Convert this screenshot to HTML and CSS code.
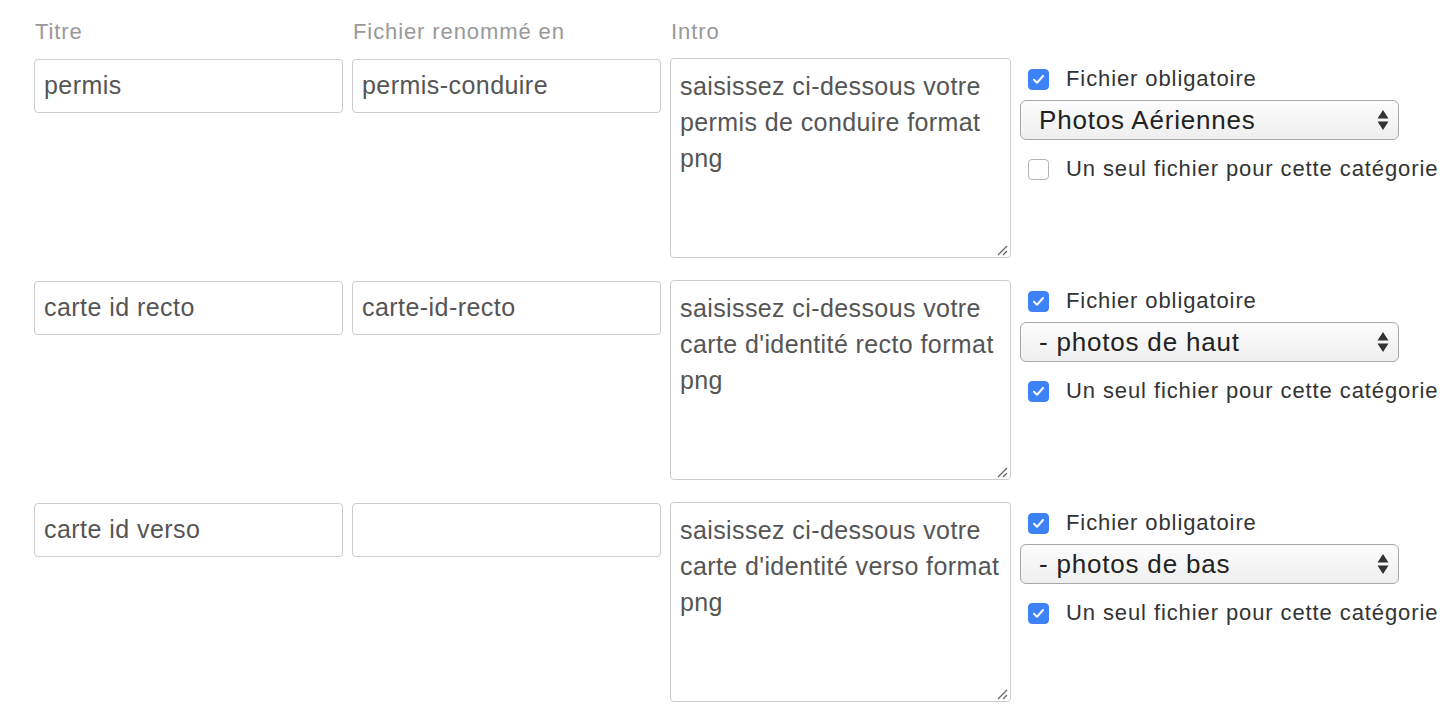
FILE: index.html
```html
<!DOCTYPE html>
<html lang="fr">
<head>
<meta charset="utf-8">
<title>Fichiers</title>
<link rel="stylesheet" href="styles.css">
</head>
<body>
<div class="form">
  <div class="row head">
    <div class="lbl">Titre</div>
    <div class="lbl">Fichier renommé en</div>
    <div class="lbl">Intro</div>
    <div></div>
  </div>

  <div class="row item">
    <div class="input">permis</div>
    <div class="input">permis-conduire</div>
    <div class="textarea">saisissez ci-dessous votre permis de conduire format png<span class="grip"><svg width="12" height="12" viewBox="0 0 12 12"><path d="M11 2 L2 11 M11 7 L7 11" stroke="#666" stroke-width="1.3"/></svg></span></div>
    <div class="side">
      <div class="check"><span class="box on"><svg width="13" height="11" viewBox="0 0 13 11"><path d="M2 5.8 L5 8.8 L11 2" fill="none" stroke="#fff" stroke-width="2" stroke-linecap="round" stroke-linejoin="round"/></svg></span><span class="ctext">Fichier obligatoire</span></div>
      <div class="select"><span>Photos Aériennes</span><svg class="arr" width="12" height="24" viewBox="0 0 12 24"><path d="M6 2 L11.5 10.5 L0.5 10.5 Z M6 22 L11.5 13.5 L0.5 13.5 Z" fill="#333"/></svg></div>
      <div class="check"><span class="box"></span><span class="ctext">Un seul fichier pour cette catégorie</span></div>
    </div>
  </div>

  <div class="row item">
    <div class="input">carte id recto</div>
    <div class="input">carte-id-recto</div>
    <div class="textarea">saisissez ci-dessous votre carte d'identité recto format png<span class="grip"><svg width="12" height="12" viewBox="0 0 12 12"><path d="M11 2 L2 11 M11 7 L7 11" stroke="#666" stroke-width="1.3"/></svg></span></div>
    <div class="side">
      <div class="check"><span class="box on"><svg width="13" height="11" viewBox="0 0 13 11"><path d="M2 5.8 L5 8.8 L11 2" fill="none" stroke="#fff" stroke-width="2" stroke-linecap="round" stroke-linejoin="round"/></svg></span><span class="ctext">Fichier obligatoire</span></div>
      <div class="select"><span>- photos de haut</span><svg class="arr" width="12" height="24" viewBox="0 0 12 24"><path d="M6 2 L11.5 10.5 L0.5 10.5 Z M6 22 L11.5 13.5 L0.5 13.5 Z" fill="#333"/></svg></div>
      <div class="check"><span class="box on"><svg width="13" height="11" viewBox="0 0 13 11"><path d="M2 5.8 L5 8.8 L11 2" fill="none" stroke="#fff" stroke-width="2" stroke-linecap="round" stroke-linejoin="round"/></svg></span><span class="ctext">Un seul fichier pour cette catégorie</span></div>
    </div>
  </div>

  <div class="row item">
    <div class="input">carte id verso</div>
    <div class="input"></div>
    <div class="textarea">saisissez ci-dessous votre carte d'identité verso format png<span class="grip"><svg width="12" height="12" viewBox="0 0 12 12"><path d="M11 2 L2 11 M11 7 L7 11" stroke="#666" stroke-width="1.3"/></svg></span></div>
    <div class="side">
      <div class="check"><span class="box on"><svg width="13" height="11" viewBox="0 0 13 11"><path d="M2 5.8 L5 8.8 L11 2" fill="none" stroke="#fff" stroke-width="2" stroke-linecap="round" stroke-linejoin="round"/></svg></span><span class="ctext">Fichier obligatoire</span></div>
      <div class="select"><span>- photos de bas</span><svg class="arr" width="12" height="24" viewBox="0 0 12 24"><path d="M6 2 L11.5 10.5 L0.5 10.5 Z M6 22 L11.5 13.5 L0.5 13.5 Z" fill="#333"/></svg></div>
      <div class="check"><span class="box on"><svg width="13" height="11" viewBox="0 0 13 11"><path d="M2 5.8 L5 8.8 L11 2" fill="none" stroke="#fff" stroke-width="2" stroke-linecap="round" stroke-linejoin="round"/></svg></span><span class="ctext">Un seul fichier pour cette catégorie</span></div>
    </div>
  </div>
</div>
</body>
</html>
```

FILE: styles.css
```css
* { box-sizing: border-box; }
html, body { margin: 0; padding: 0; background: #fff; }
body {
  font-family: "Liberation Sans", Arial, sans-serif;
  width: 1454px;
  height: 712px;
  overflow: hidden;
}
.form {
  padding: 20px 0 0 34px;
}
.row {
  display: grid;
  grid-template-columns: 309px 309px 341px 1fr;
  column-gap: 9px;
}
.head {
  height: 38px;
}
.lbl {
  font-size: 22px;
  letter-spacing: 0.9px;
  line-height: 24px;
  color: #999;
  padding-left: 1px;
}
.item {
  margin-bottom: 22px;
  align-items: start;
}
.input {
  margin-top: 1px;
  height: 54px;
  border: 1.5px solid #ccc;
  border-radius: 4px;
  font-size: 25px;
  letter-spacing: 0.45px;
  line-height: 51px;
  color: #555;
  padding-left: 9px;
  white-space: nowrap;
}
.textarea {
  position: relative;
  height: 200px;
  border: 1.5px solid #ccc;
  border-radius: 4px;
  font-size: 25px;
  letter-spacing: 0.4px;
  line-height: 36px;
  color: #555;
  padding: 9px 4px 0 9px;
}
.grip {
  position: absolute;
  right: 2px;
  bottom: 1px;
  line-height: 0;
}
.side {
  padding-top: 10px;
}
.check {
  display: flex;
  align-items: center;
  height: 22px;
  padding-left: 8px;
}
.box {
  width: 21px;
  height: 21px;
  border-radius: 4px;
  border: 1.5px solid #b5b5b5;
  background: #fff;
  display: flex;
  align-items: center;
  justify-content: center;
  flex: none;
}
.box.on {
  background: #3e82f7;
  border-color: #3e82f7;
}
.ctext {
  margin-left: 17px;
  font-size: 22px;
  letter-spacing: 0.9px;
  color: #333;
  white-space: nowrap;
}
.select {
  margin: 10px 0 18px 0;
  width: 379px;
  height: 40px;
  border: 1.5px solid #a9a9a9;
  border-radius: 6px;
  background: linear-gradient(#fcfcfc, #efefef);
  display: flex;
  align-items: center;
  justify-content: space-between;
  padding: 0 9px 0 18px;
  font-size: 26px;
  letter-spacing: 0.8px;
  color: #222;
}
.arr { flex: none; }
```
